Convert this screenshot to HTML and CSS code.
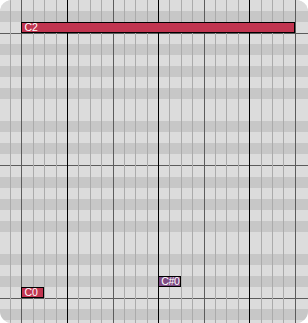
FILE: index.html
```html
<!DOCTYPE html>
<html lang="en">
<head>
    <meta charset="UTF-8">
    <meta name="viewport" content="width=device-width, initial-scale=1.0">
    <title>Piano roll</title>
    <link rel="stylesheet" href="styles.css">
</head>
<body>
    <div class="roll">
        <!-- keys, top to bottom: D2 ... A-1 -->
        <div class="rows">
            <div class="row"></div>
            <div class="row black"></div>
            <div class="row"></div>

            <div class="row b"></div>
            <div class="row black"></div>
            <div class="row"></div>
            <div class="row black"></div>
            <div class="row"></div>
            <div class="row black"></div>
            <div class="row"></div>
            <div class="row"></div>
            <div class="row black"></div>
            <div class="row"></div>
            <div class="row black"></div>
            <div class="row"></div>

            <div class="row b"></div>
            <div class="row black"></div>
            <div class="row"></div>
            <div class="row black"></div>
            <div class="row"></div>
            <div class="row black"></div>
            <div class="row"></div>
            <div class="row"></div>
            <div class="row black"></div>
            <div class="row"></div>
            <div class="row black"></div>
            <div class="row"></div>

            <div class="row b"></div>
            <div class="row black"></div>
            <div class="row"></div>
        </div>

        <!-- time grid -->
        <div class="cols">
            <div class="col"></div>
            <div class="col"></div>
            <div class="col beat"></div>
            <div class="col"></div>
            <div class="col"></div>
            <div class="col"></div>
            <div class="col bar"></div>
            <div class="col"></div>
            <div class="col"></div>
            <div class="col"></div>
            <div class="col beat"></div>
            <div class="col"></div>
            <div class="col"></div>
            <div class="col"></div>
            <div class="col bar"></div>
            <div class="col"></div>
            <div class="col"></div>
            <div class="col"></div>
            <div class="col beat"></div>
            <div class="col"></div>
            <div class="col"></div>
            <div class="col"></div>
            <div class="col bar"></div>
            <div class="col"></div>
            <div class="col"></div>
            <div class="col"></div>
            <div class="col beat"></div>
        </div>

        <!-- notes -->
        <div class="note note-c2">C2</div>
        <div class="note note-cs0 sharp">C#0</div>
        <div class="note note-c0">C0</div>
    </div>
</body>
</html>
```

FILE: styles.css
```css
:root {
    --key-white: #dcdcdc;
    --key-black: #c7c7c7;
    --line: #ababab;
    --line-beat: #5c5c5c;
    --row-h: 11.04px;
    --col-w: 11.4px;
}

body {
    margin: 0;
    background: #fff;
}

.roll {
    position: relative;
    width: 308px;
    height: 323px;
    overflow: hidden;
    border-radius: 12px;
    background: var(--key-white);
}

.rows {
    display: flex;
    flex-direction: column;
}

.row {
    flex: 0 0 var(--row-h);
    box-sizing: border-box;
    background: var(--key-white);
}

.row.black {
    background: var(--key-black);
}

/* octave line between C and B */
.row.b {
    border-top: 1px solid var(--line-beat);
}

.cols {
    position: absolute;
    top: 0;
    bottom: 0;
    left: -1.4px;
    display: flex;
}

.col {
    flex: 0 0 var(--col-w);
    box-sizing: border-box;
    border-left: 1px solid var(--line);
}

.col.beat {
    border-left-color: var(--line-beat);
}

.col.bar {
    border-left-color: #000;
}

.note {
    position: absolute;
    height: var(--row-h);
    box-sizing: border-box;
    padding-left: 2px;
    border: 1px solid #000;
    background: #c13550;
    color: #fff;
    font-family: "Liberation Sans", Arial, sans-serif;
    font-size: 10.5px;
    line-height: 9px;
    white-space: nowrap;
}

.note.sharp {
    background: #7d4b83;
    letter-spacing: -0.3px;
}

.note-c2 {
    top: calc(var(--row-h) * 2);
    left: 21.4px;
    width: 273.6px;
}

.note-cs0 {
    top: calc(var(--row-h) * 25);
    left: 158.2px;
    width: 22.8px;
}

.note-c0 {
    top: calc(var(--row-h) * 26);
    left: 21.4px;
    width: 22.8px;
}
```
